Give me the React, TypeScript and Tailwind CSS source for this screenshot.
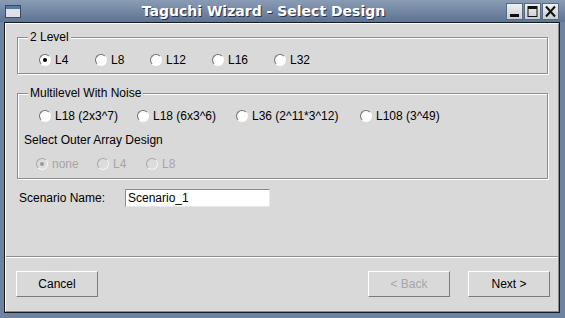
import React from "react"

const font = { fontFamily: '"Liberation Sans", Arial, sans-serif' }

function Radio({ checked = false, disabled = false }: { checked?: boolean; disabled?: boolean }) {
  return (
    <span
      className={
        "flex items-center justify-center w-[12px] h-[12px] rounded-full border shrink-0 " +
        (disabled
          ? "bg-[#dcdcdc] border-t-[#a8a8a8] border-l-[#a8a8a8] border-r-[#f4f4f4] border-b-[#f4f4f4]"
          : "bg-white border-t-[#6f6f6f] border-l-[#6f6f6f] border-r-white border-b-white")
      }
    >
      {checked && <span className={"w-[4px] h-[4px] rounded-full " + (disabled ? "bg-[#9a9a9a]" : "bg-black")} />}
    </span>
  )
}

function Option({ label, w, checked, disabled, gap = "gap-[4px]" }: { label: string; w: string; checked?: boolean; disabled?: boolean; gap?: string }) {
  return (
    <div className={"flex items-center h-[14px] " + gap + " " + w}>
      <Radio checked={checked} disabled={disabled} />
      <span className={"text-[12px] leading-[14px] whitespace-nowrap " + (disabled ? "text-[#a6a6a6]" : "text-black")}>{label}</span>
    </div>
  )
}

function Group({ title, className, children }: { title: string; className: string; children: React.ReactNode }) {
  return (
    <div className={"relative ml-[11px] w-[531px] border border-[#8e8e8e] shadow-[inset_1px_1px_0_#fff,1px_1px_0_#fff] " + className}>
      <span className="absolute left-[10px] -top-[8px] bg-[#d9d9d9] px-[2px] text-[12px] leading-[14px] text-black">{title}</span>
      {children}
    </div>
  )
}

function Button({ label, disabled, className = "" }: { label: string; disabled?: boolean; className?: string }) {
  return (
    <button
      className={
        "w-[82px] h-[26px] bg-[#d9d9d9] border border-t-white border-l-white border-r-[#7c7c7c] border-b-[#7c7c7c] text-[12px] " +
        (disabled ? "text-[#a6a6a6] " : "text-black ") +
        className
      }
    >
      {label}
    </button>
  )
}

function WinButton({ children }: { children: React.ReactNode }) {
  return (
    <div className="w-[17px] h-[17px] bg-gradient-to-b from-[#f0f0f0] to-[#c9ccd0] border border-[#5a6a80] flex items-center justify-center">
      <svg width="13" height="13" viewBox="0 0 13 13">{children}</svg>
    </div>
  )
}

export default function App() {
  return (
    <div className="w-[565px] h-[318px] bg-[#6c83a1] flex flex-col pl-[4px] pr-[5px] pb-[5px] overflow-hidden" style={font}>
      {/* title bar */}
      <div className="h-[22px] -ml-[4px] -mr-[5px] flex items-center bg-gradient-to-b from-[#8a9cb4] to-[#5e7494]">
        <div className="ml-[5px] w-[16px] h-[13px] border border-[#3c4a60] bg-[#dde2e8] flex flex-col">
          <div className="h-[3px] bg-[#5677a8]" />
        </div>
        <div className="flex-1 text-center text-white font-bold text-[14px] [text-shadow:1px_1px_0_#2a3445]" style={{ fontFamily: '"DejaVu Sans", sans-serif' }}>
          Taguchi Wizard - Select Design
        </div>
        <div className="flex gap-[1px] mr-[6px]">
          <WinButton>
            <rect x="2" y="9" width="9" height="3" fill="#111" />
          </WinButton>
          <WinButton>
            <rect x="2" y="1.5" width="9" height="10" fill="none" stroke="#111" strokeWidth="1" />
            <rect x="2" y="1" width="9" height="3" fill="#111" />
          </WinButton>
          <WinButton>
            <path d="M2 1.5 L11 11.5 M11 1.5 L2 11.5" stroke="#111" strokeWidth="2" />
          </WinButton>
        </div>
      </div>

      {/* window content */}
      <div className="flex-1 border border-[#1a1a1a] flex flex-col">
        <div className="flex-1 bg-[#d9d9d9] border border-t-white border-l-white border-r-[#8c8c8c] border-b-[#8c8c8c] flex flex-col">
          <Group title="2 Level" className="mt-[13px] h-[37px]">
            <div className="flex mt-[15px] pl-[21px]">
              <Option label="L4" w="w-[56px]" checked />
              <Option label="L8" w="w-[55px]" />
              <Option label="L12" w="w-[62px]" />
              <Option label="L16" w="w-[62px]" />
              <Option label="L32" w="w-[60px]" />
            </div>
          </Group>

          <Group title="Multilevel With Noise" className="mt-[19px] h-[86px]">
            <div className="flex mt-[15px] pl-[21px]">
              <Option label="L18 (2x3^7)" w="w-[98px]" />
              <Option label="L18 (6x3^6)" w="w-[99px]" />
              <Option label="L36 (2^11*3^12)" w="w-[124px]" />
              <Option label="L108 (3^49)" w="w-[100px]" />
            </div>
            <div className="mt-[10px] pl-[6px] text-[12px] leading-[14px] text-black">Select Outer Array Design</div>
            <div className="flex mt-[10px] pl-[18px]">
              <Option label="none" w="w-[61px]" checked disabled />
              <Option label="L4" w="w-[49px]" disabled />
              <Option label="L8" w="w-[40px]" disabled />
            </div>
          </Group>

          <div className="flex items-center mt-[10px] ml-[13px] h-[18px]">
            <span className="w-[106px] text-[12px] text-black">Scenario Name:</span>
            <div className="w-[145px] h-[18px] bg-white border border-t-[#8a8a8a] border-l-[#8a8a8a] border-r-[#e8e8e8] border-b-[#e8e8e8] flex items-center pl-[2px] text-[12px] text-black">
              Scenario_1
            </div>
          </div>

          <div className="mt-[49px] h-[2px] border-t border-t-[#8e8e8e] border-b border-b-white" />

          <div className="flex mt-[13px] pl-[10px] pr-[8px]">
            <Button label="Cancel" />
            <div className="flex-1" />
            <Button label="< Back" disabled />
            <Button label="Next >" className="ml-[18px]" />
          </div>
        </div>
      </div>
    </div>
  )
}
